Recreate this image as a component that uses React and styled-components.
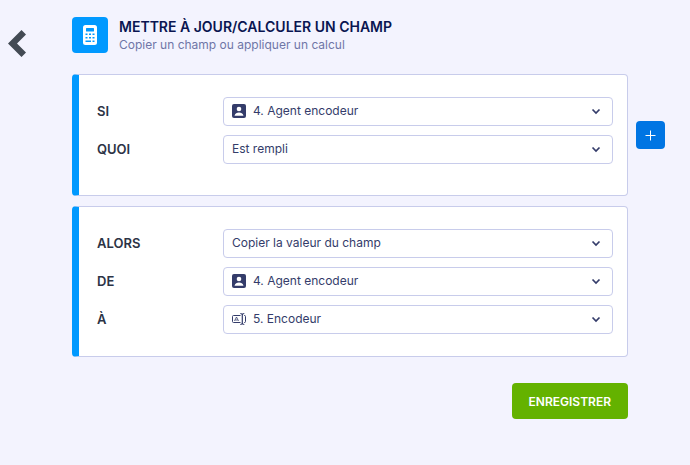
import React, { useId } from "react";
import styled, { createGlobalStyle } from "styled-components";

const GlobalStyle = createGlobalStyle`
  *, *::before, *::after { box-sizing: border-box; }
  body {
    margin: 0;
    background: #f3f3fe;
    color: #2c3345;
    font-family: Inter, "Liberation Sans", sans-serif;
    font-size: 12px;
  }
  button, select { font: inherit; }
`;

const Page = styled.main`
  display: grid;
  grid-template-columns: 72px minmax(0, 1fr) 62px;
  padding-top: 16px;
`;

const BackButton = styled.button`
  justify-self: start;
  width: 20px;
  height: 28px;
  margin: 14px 0 0 8px;
  padding: 0;
  border: 0;
  background: none;
  color: #434a54;
  cursor: pointer;
  svg { display: block; }
`;

const Header = styled.header`
  display: flex;
  align-items: center;
  gap: 11px;
  height: 38px;
`;

const Badge = styled.span`
  display: flex;
  align-items: center;
  justify-content: center;
  width: 36px;
  height: 36px;
  border-radius: 4px;
  background: #0099ff;
`;

const Title = styled.h1`
  margin: 0;
  color: #0a1551;
  font-size: 14px;
  font-weight: 600;
  line-height: 20px;
  text-transform: uppercase;
`;

const Subtitle = styled.p`
  margin: 0;
  color: #6f76a7;
  font-size: 12px;
  line-height: 16px;
`;

const Card = styled.section`
  grid-column: 2;
  display: flex;
  flex-direction: column;
  gap: 9px;
  margin-top: ${(p) => p.$top}px;
  padding: 22px 14px ${(p) => p.$bottom}px 18px;
  border: 1px solid #c8cceb;
  border-left: 7px solid #0099ff;
  border-radius: 4px;
  background: #fff;
`;

const Row = styled.div`
  display: grid;
  grid-template-columns: 126px minmax(0, 1fr);
  align-items: center;
`;

const Label = styled.label`
  padding-bottom: 2px;
  font-size: 13px;
  font-weight: 600;
`;

const SelectBox = styled.span`
  position: relative;
  display: flex;
  color: #343c6a;
`;

const Select = styled.select`
  appearance: none;
  width: 100%;
  height: 29px;
  padding: 0 30px 2px ${(p) => (p.$icon ? 29 : 8)}px;
  border: 1px solid #c8cceb;
  border-radius: 4px;
  background: #fff;
  color: inherit;
`;

const FieldIcon = styled.span`
  position: absolute;
  left: 9px;
  top: 7px;
  pointer-events: none;
  svg { display: block; }
`;

const Arrow = styled.span`
  position: absolute;
  right: 12px;
  top: 11px;
  pointer-events: none;
  svg { display: block; }
`;

const AddButton = styled.button`
  grid-column: 3;
  align-self: center;
  display: flex;
  align-items: center;
  justify-content: center;
  width: 29px;
  height: 28px;
  margin: 16px 0 0 8px;
  padding: 0;
  border: 0;
  border-radius: 4px;
  background: #0075e3;
  color: #fff;
  cursor: pointer;
`;

const SaveButton = styled.button`
  grid-column: 2;
  justify-self: end;
  height: 36px;
  margin: 26px 0;
  padding: 0 17px;
  border: 0;
  border-radius: 4px;
  background: #64b200;
  color: #fff;
  font-weight: 600;
  text-transform: uppercase;
  cursor: pointer;
`;

const BackIcon = () => (
  <svg width="20" height="28" viewBox="0 0 20 28" aria-hidden="true">
    <path d="M13.500 0 18 4.500 9 13.500l9 9-4.500 4.500L0 13.500z" fill="currentColor" />
  </svg>
);

const CalculatorIcon = () => (
  <svg width="16" height="20" viewBox="0 0 16 20" aria-hidden="true">
    <rect x="1" width="14" height="20" rx="2.500" fill="#fff" />
    <g fill="#0099ff">
      <rect x="4" y="3" width="8" height="3.500" rx=".5" />
      <rect x="3.500" y="8.500" width="2" height="1.500" />
      <rect x="7" y="8.500" width="2" height="1.500" />
      <rect x="10.500" y="8.500" width="2" height="1.500" />
      <rect x="3.500" y="12" width="2" height="1.500" />
      <rect x="7" y="12" width="2" height="1.500" />
      <rect x="10.500" y="12" width="2" height="1.500" />
      <rect x="3.500" y="15.500" width="5.500" height="1.500" />
      <rect x="10.500" y="15.500" width="2" height="1.500" />
    </g>
  </svg>
);

const PersonIcon = () => (
  <svg width="14" height="14" viewBox="0 0 14 14" aria-hidden="true">
    <rect width="14" height="14" rx="2" fill="currentColor" />
    <circle cx="7" cy="5" r="2.300" fill="#fff" />
    <path d="M2.500 11.700C3 9.400 5 8.600 7 8.600s4 .8 4.500 3.100z" fill="#fff" />
  </svg>
);

const TextFieldIcon = () => (
  <svg width="14" height="14" viewBox="0 0 14 14" fill="none" stroke="currentColor" aria-hidden="true">
    <path d="M8.500 3.500H1.500a1 1 0 0 0-1 1v5a1 1 0 0 0 1 1h7M12 3.500h.5a1 1 0 0 1 1 1v5a1 1 0 0 1-1 1H12" />
    <path d="M8.300 1.500q2 0 2 1.500v8q0 1.500-2 1.500M12.300 1.500q-2 0-2 1.500v8q0 1.500 2 1.500" strokeWidth="1.200" />
    <path d="M2.500 9 4.500 5l2 4M3.300 8h2.400" strokeWidth=".8" />
  </svg>
);

const ArrowIcon = () => (
  <svg width="10" height="7" viewBox="0 0 10 7" fill="none" aria-hidden="true">
    <path d="m1.500 1.500 3.500 3.500 3.500-3.500" stroke="currentColor" strokeWidth="1.700" />
  </svg>
);

const PlusIcon = () => (
  <svg width="11" height="11" viewBox="0 0 11 11" aria-hidden="true">
    <path d="M5.500 .5v10M.5 5.500h10" stroke="currentColor" />
  </svg>
);

function Field({ label, value, icon }) {
  const id = useId();
  return (
    <Row>
      <Label htmlFor={id}>{label}</Label>
      <SelectBox>
        <Select id={id} $icon={Boolean(icon)}>
          <option>{value}</option>
        </Select>
        {icon && <FieldIcon>{icon}</FieldIcon>}
        <Arrow><ArrowIcon /></Arrow>
      </SelectBox>
    </Row>
  );
}

export default function App() {
  return (
    <>
      <GlobalStyle />
      <Page>
        <BackButton type="button" aria-label="Retour"><BackIcon /></BackButton>
        <Header>
          <Badge><CalculatorIcon /></Badge>
          <div>
            <Title>Mettre à jour/calculer un champ</Title>
            <Subtitle>Copier un champ ou appliquer un calcul</Subtitle>
          </div>
        </Header>
        <Card $top={16} $bottom={31}>
          <Field label="SI" value="4. Agent encodeur" icon={<PersonIcon />} />
          <Field label="QUOI" value="Est rempli" />
        </Card>
        <AddButton type="button" aria-label="Ajouter une condition"><PlusIcon /></AddButton>
        <Card $top={10} $bottom={22}>
          <Field label="ALORS" value="Copier la valeur du champ" />
          <Field label="DE" value="4. Agent encodeur" icon={<PersonIcon />} />
          <Field label="À" value="5. Encodeur" icon={<TextFieldIcon />} />
        </Card>
        <SaveButton type="button">Enregistrer</SaveButton>
      </Page>
    </>
  );
}
